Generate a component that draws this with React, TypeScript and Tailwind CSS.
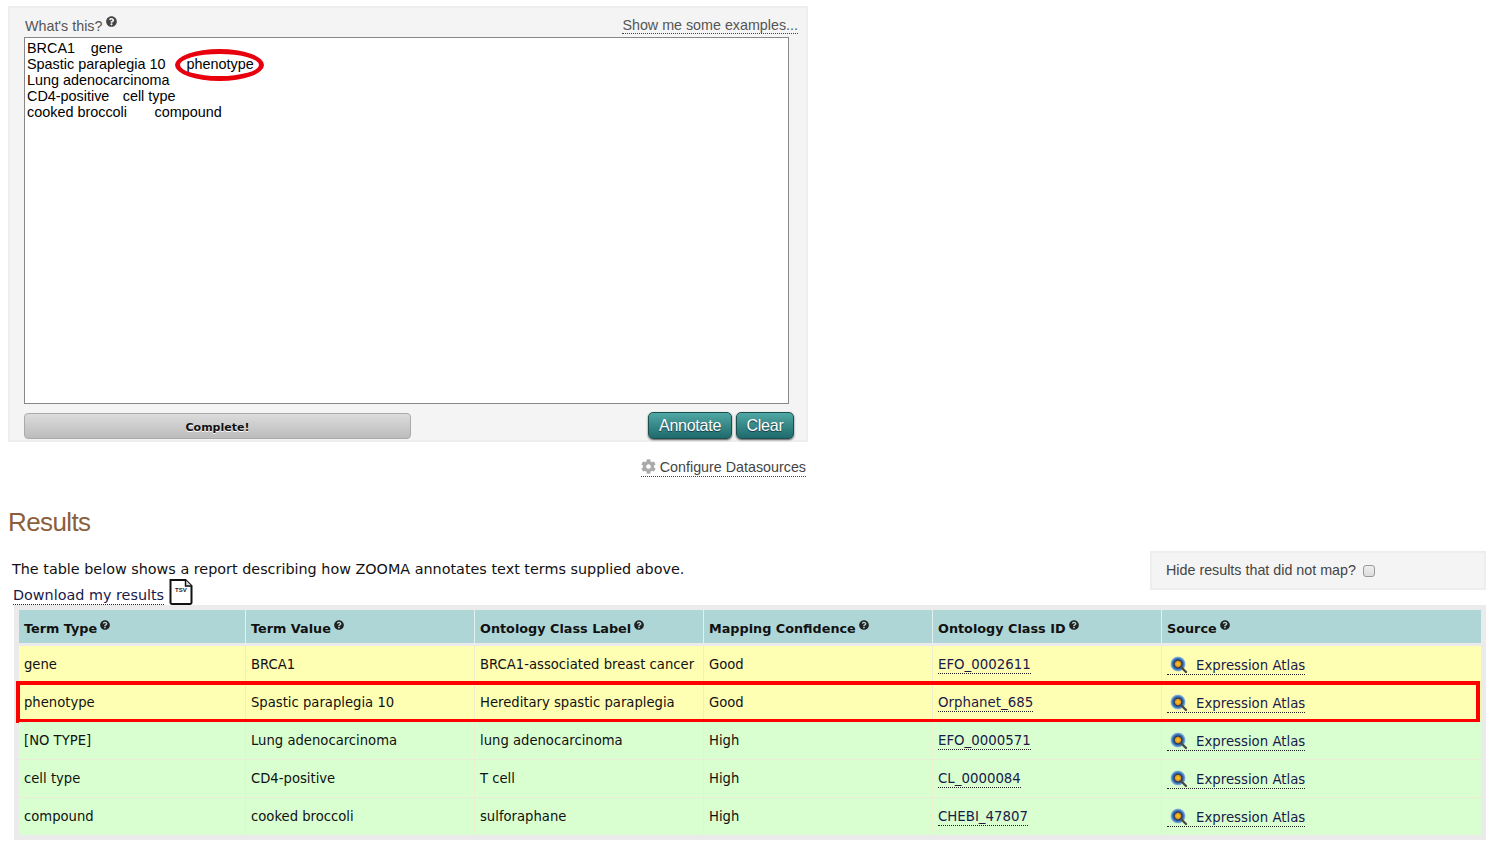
import { FaQuestionCircle, FaCog } from 'react-icons/fa';

const sans = 'font-["Liberation_Sans",Arial,sans-serif]';

const termText = `BRCA1\tgene
Spastic paraplegia 10\tphenotype
Lung adenocarcinoma
CD4-positive\tcell type
cooked broccoli\tcompound`;

const columns = ['Term Type', 'Term Value', 'Ontology Class Label', 'Mapping Confidence', 'Ontology Class ID', 'Source'];

const rows = [
  { type: 'gene', value: 'BRCA1', label: 'BRCA1-associated breast cancer', confidence: 'Good', id: 'EFO_0002611' },
  { type: 'phenotype', value: 'Spastic paraplegia 10', label: 'Hereditary spastic paraplegia', confidence: 'Good', id: 'Orphanet_685' },
  { type: '[NO TYPE]', value: 'Lung adenocarcinoma', label: 'lung adenocarcinoma', confidence: 'High', id: 'EFO_0000571' },
  { type: 'cell type', value: 'CD4-positive', label: 'T cell', confidence: 'High', id: 'CL_0000084' },
  { type: 'compound', value: 'cooked broccoli', label: 'sulforaphane', confidence: 'High', id: 'CHEBI_47807' },
];

function AtlasIcon({ uid }: { uid: string }) {
  return (
    <svg width="18" height="18" viewBox="0 0 18 18" className="shrink-0">
      <defs>
        <radialGradient id={uid} cx="50%" cy="50%" r="50%">
          <stop offset="0%" stopColor="#ffd21a" />
          <stop offset="35%" stopColor="#e8941a" />
          <stop offset="50%" stopColor="#23395f" />
          <stop offset="75%" stopColor="#3f7fc0" />
          <stop offset="100%" stopColor="#a9c8e4" />
        </radialGradient>
      </defs>
      <circle cx="8" cy="8" r="7.6" fill={`url(#${uid})`} />
      <path d="M11 11l5 5" stroke="#4a4a4a" strokeWidth="2.4" strokeLinecap="round" />
    </svg>
  );
}

function TsvIcon() {
  return (
    <svg width="24" height="26" viewBox="0 0 24 26" className="shrink-0">
      <path
        d="M1.5 1h15l6 6v16.5a1.5 1.5 0 0 1-1.5 1.5h-18a1.5 1.5 0 0 1-1.5-1.5z"
        fill="#fff"
        stroke="#111"
        strokeWidth="2"
      />
      <path d="M16.5 1v6h6" fill="#ddd" stroke="#111" strokeWidth="1.4" />
      <text x="6" y="13" fontSize="6" fontWeight="700" fill="#222" fontFamily="Liberation Sans, sans-serif">
        TSV
      </text>
    </svg>
  );
}

function Help({ size = 11 }: { size?: number }) {
  return <FaQuestionCircle size={size} className="inline-block text-[#222]" />;
}

export default function App() {
  return (
    <div className="min-h-[847px] bg-white pl-[8px] pr-[7px] pt-[6px] font-['DejaVu_Sans',Verdana,sans-serif] text-[#111]">
      {/* search form */}
      <div className={`h-[436px] w-[800px] border-2 border-[#eeeeee] bg-[#f4f4f4] px-[14px] ${sans}`}>
        <div className="flex h-[29px] items-end justify-between pb-[3px] text-[14.3px] leading-[16px] text-[#555]">
          <span className="ml-[1px] flex items-start gap-[4px]">
            What's this?
            <FaQuestionCircle size={11} className="-mt-[2px] text-[#444]" />
          </span>
          <span className="mr-[-6px] border-b border-dotted border-[#444]">Show me some examples...</span>
        </div>
        <div className="relative h-[367px] w-[765px]">
          <textarea
            readOnly
            defaultValue={termText}
            className="h-full w-full resize-none border border-[#888] bg-white px-[2px] py-[2px] text-[14.4px] leading-[16px] text-black [tab-size:31.9px] outline-none"
          />
          <div className="pointer-events-none absolute left-[151px] top-[12px] h-[32px] w-[89px] rounded-[50%] border-[5px] border-[#e8000d]" />
        </div>
        <div className="mt-[8px] flex items-start justify-between">
          <div className="mt-[1px] flex h-[26px] w-[387px] items-center justify-center rounded-[4px] border border-[#aaa] bg-gradient-to-b from-[#dcdcdc] to-[#bcbcbc] pt-[5px] font-['DejaVu_Sans',sans-serif] text-[11px] font-bold text-[#111] [text-shadow:0_1px_0_#fff]">
            Complete!
          </div>
          <div className="mr-[-2px] flex gap-[4px]">
            <button className="h-[27px] w-[84px] rounded-[5px] border border-[#1c4f50] bg-gradient-to-b from-[#4fa8a4] to-[#1f6a6c] text-[16px] tracking-[-0.25px] text-white shadow-[0_1px_2px_#555] [text-shadow:0_1px_1px_#134]">
              Annotate
            </button>
            <button className="h-[27px] w-[58px] rounded-[5px] border border-[#1c4f50] bg-gradient-to-b from-[#4fa8a4] to-[#1f6a6c] text-[16px] tracking-[-0.25px] text-white shadow-[0_1px_2px_#555] [text-shadow:0_1px_1px_#134]">
              Clear
            </button>
          </div>
        </div>
      </div>

      <div className={`flex h-[42px] w-[798px] items-end justify-end pb-[7px] text-[14.3px] text-[#444] ${sans}`}>
        <span className="flex items-center gap-[4px] border-b border-dotted border-[#444] leading-[17px]">
          <FaCog size={15} className="-mt-[3px] text-[#aaa]" />
          Configure Datasources
        </span>
      </div>

      <h2 className={`mt-[21px] h-[43px] text-[26px] leading-[34px] tracking-[-0.6px] text-[#8b5e3c] ${sans}`}>Results</h2>

      {/* intro + filter */}
      <div className="flex h-[57px] items-start justify-between">
        <div className="pl-[4px] pt-[12px] text-[14.36px] leading-[18px]">
          <p>The table below shows a report describing how ZOOMA annotates text terms supplied above.</p>
          <p className="mt-[1px] flex items-end gap-[5px] text-[#1a1a4a]">
            <span className="ml-[1px] border-b border-dotted border-[#222] leading-[17px]">Download my results</span>
            <TsvIcon />
          </p>
        </div>
        <div className={`mt-[3px] flex h-[39px] w-[336px] items-center gap-[7px] border-2 border-[#eeeeee] bg-[#f4f4f4] pl-[14px] text-[14.3px] text-[#444] ${sans}`}>
          Hide results that did not map?
          <span className="h-[12px] w-[12px] rounded-[3px] border border-[#999] bg-gradient-to-b from-[#eee] to-[#ddd]" />
        </div>
      </div>

      {/* results table */}
      <div className="ml-[6px] bg-[#ebebeb] px-[5px] py-[5px] text-[13.2px]">
        <div className="grid h-[33px] grid-cols-[227px_229px_229px_229px_229px_1fr] bg-[#aed6d6] text-[12.8px] font-bold">
          {columns.map((c) => (
            <div key={c} className="flex items-center gap-[3px] border-r border-[#e4efef] pl-[5px] pt-[5px] last:border-r-0">
              {c}
              <span className="mb-[9px] flex">
                <Help size={10} />
              </span>
            </div>
          ))}
        </div>
        <div className="mt-[3px]">
          {rows.map((r, i) => (
            <div
              key={r.id}
              className={`relative grid h-[38px] grid-cols-[227px_229px_229px_229px_229px_1fr] border-b border-[#ececd8] pb-[1px] last:h-[37px] last:border-b-0 ${
                i < 2 ? 'bg-[#ffffb3]' : 'bg-[#d9ffd0]'
              }`}
            >
              {[r.type, r.value, r.label, r.confidence].map((v, j) => (
                <div key={j} className="flex items-center border-r border-[#eeeecc] pl-[5px] pt-[2px]">
                  {v}
                </div>
              ))}
              <div className="flex items-center border-r border-[#eeeecc] pl-[5px] text-[13.35px] text-[#1a1a4a]">
                <span className="mt-[1px] border-b border-dotted border-[#222] leading-[17px]">{r.id}</span>
              </div>
              <div className="flex items-center pl-[5px] text-[13.3px] text-[#1a1a4a]">
                <span className="mt-[3px] flex items-center gap-[8px] border-b border-dotted border-[#222] pl-[3px] leading-[17px]">
                  <AtlasIcon uid={`atlas-${i}`} />
                  Expression Atlas
                </span>
              </div>
              {i === 1 && (
                <div className="pointer-events-none absolute -left-[3px] right-[1px] -top-[3px] -bottom-[2px] border-[4px] border-[#ff0000]" />
              )}
            </div>
          ))}
        </div>
      </div>
    </div>
  );
}
